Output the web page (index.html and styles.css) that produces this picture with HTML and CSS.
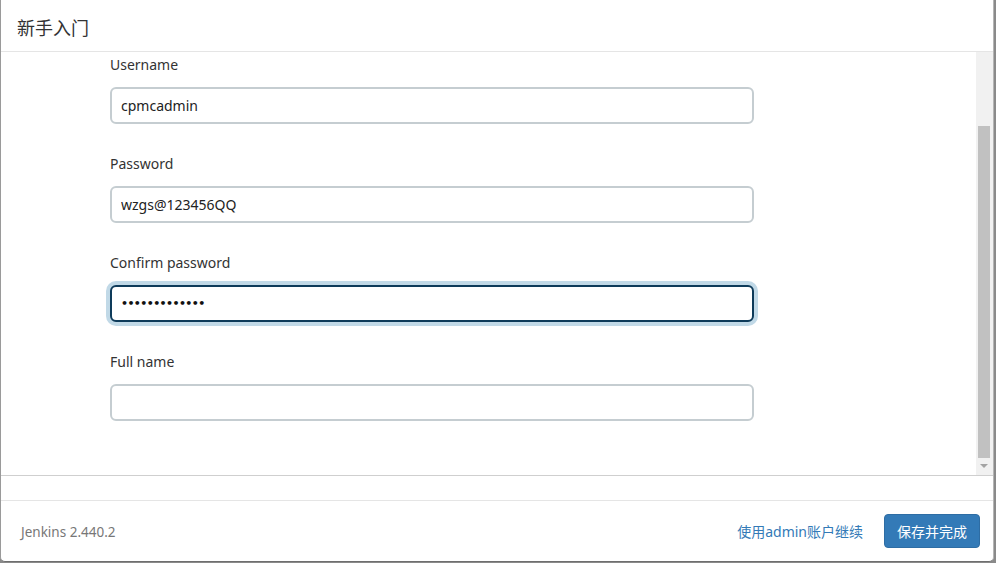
FILE: index.html
```html
<!DOCTYPE html>
<html lang="zh">
<head>
<meta charset="utf-8">
<title>新手入门</title>
<link rel="stylesheet" href="styles.css">
</head>
<body>
<div class="modal">
  <div class="modal-header"><h4 class="modal-title">新手入门</h4></div>
  <div class="modal-body">
    <div class="content">
      <div class="form-group">
        <label class="lbl">Username</label>
        <input class="field" type="text" value="cpmcadmin">
      </div>
      <div class="form-group">
        <label class="lbl">Password</label>
        <input class="field" type="text" value="wzgs@123456QQ">
      </div>
      <div class="form-group">
        <label class="lbl">Confirm password</label>
        <input class="field focused" type="password" value="wzgs@123456QQ">
      </div>
      <div class="form-group">
        <label class="lbl">Full name</label>
        <input class="field" type="text" value="">
      </div>
    </div>
    <div class="scrollbar">
      <div class="sb-track"><div class="sb-thumb"></div></div>
      <div class="sb-arrow"></div>
    </div>
  </div>
  <div class="spacer"></div>
  <div class="modal-footer">
    <span class="version">Jenkins 2.440.2</span>
    <div class="actions">
      <a class="link" href="#">使用admin账户继续</a>
      <button class="btn">保存并完成</button>
    </div>
  </div>
</div>
</body>
</html>
```
FILE: styles.css
```css
html, body {
  margin: 0;
  padding: 0;
  background: #8a8a8a;
  width: 996px;
  height: 563px;
  overflow: hidden;
}
body {
  font-family: "Noto Sans", "Open Sans", "Noto Sans CJK SC", sans-serif;
  color: #333;
}
.modal {
  box-sizing: border-box;
  width: 994px;
  height: 562px;
  background: #fff;
  border-left: 1px solid #9a9a9a;
  border-right: 1px solid #b5b5b5;
  border-bottom: 1px solid #6e6e6e;
  border-radius: 0 0 5px 5px;
  display: flex;
  flex-direction: column;
}
.modal-header {
  height: 51px;
  border-bottom: 1px solid #e5e5e5;
  display: flex;
  align-items: center;
  padding-left: 16px;
  flex-shrink: 0;
}
.modal-title {
  margin: 0;
  font-family: "Noto Sans CJK SC", sans-serif;
  font-size: 18px;
  font-weight: 400;
  color: #333;
  position: relative;
  top: 1px;
}
.modal-body {
  height: 423px;
  display: flex;
  border-bottom: 1px solid #cfcfcf;
  flex-shrink: 0;
}
.content {
  flex: 1;
  padding: 2px 0 0 109px;
}
.form-group {
  margin-bottom: 29px;
}
.lbl {
  display: block;
  font-size: 14px;
  line-height: 20px;
  margin-bottom: 13px;
  color: #333;
  position: relative;
  top: 1px;
}
.field {
  display: block;
  box-sizing: border-box;
  width: 644px;
  height: 37px;
  border: 2px solid #c5cdd1;
  border-radius: 6px;
  padding: 0 9px;
  font-family: "Noto Sans", "Open Sans", sans-serif;
  font-size: 14px;
  color: #222;
  background: #fff;
  outline: none;
}
.field.focused {
  border-color: #0e3b5a;
  box-shadow: 0 0 0 4px #c1d9e7;
  font-family: "DejaVu Sans", sans-serif;
  font-size: 11px;
  font-weight: 700;
  letter-spacing: -0.6px;
  color: #111;
}
.scrollbar {
  width: 17px;
  background: #f1f1f1;
  display: flex;
  flex-direction: column;
}
.sb-track {
  flex: 1;
  padding: 74px 3px 0 2px;
}
.sb-thumb {
  height: 332px;
  background: #c1c1c1;
}
.sb-arrow {
  height: 17px;
  position: relative;
}
.sb-arrow::after {
  content: "";
  position: absolute;
  left: 4px;
  top: 6px;
  border-left: 4px solid transparent;
  border-right: 4px solid transparent;
  border-top: 4px solid #a3a3a3;
}
.spacer {
  height: 24px;
  border-bottom: 1px solid #e5e5e5;
  flex-shrink: 0;
}
.modal-footer {
  flex: 1;
  display: flex;
  align-items: center;
  justify-content: space-between;
  padding: 0 13px 0 20px;
}
.version {
  font-size: 13.5px;
  color: #777;
  position: relative;
  top: 1px;
}
.actions {
  display: flex;
  align-items: center;
  gap: 21px;
}
.link {
  font-family: "Noto Sans", "Noto Sans CJK SC", sans-serif;
  font-size: 14px;
  color: #337ab7;
  text-decoration: none;
}
.btn {
  width: 96px;
  height: 34px;
  border: 1px solid #2e6da4;
  border-radius: 4px;
  background: #337ab7;
  color: #fff;
  font-family: "Noto Sans CJK SC", sans-serif;
  font-size: 14px;
  padding: 0;
}
```
